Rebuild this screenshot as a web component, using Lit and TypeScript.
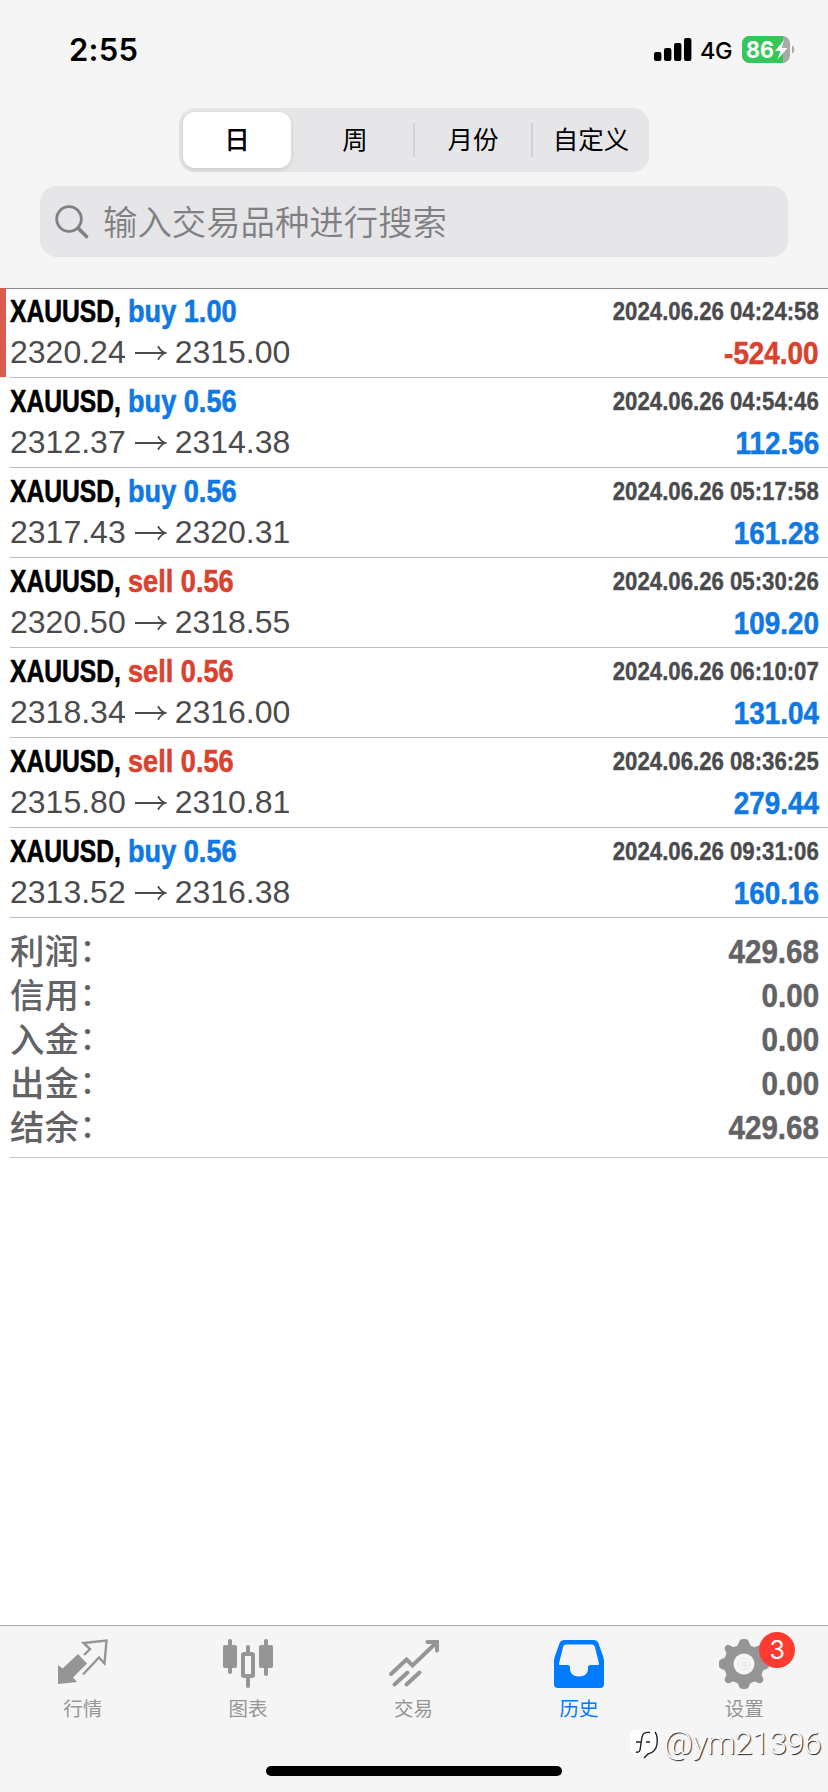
import { LitElement, html, css, svg } from "lit";
import { customElement, property } from "lit/decorators.js";
import { classMap } from "lit/directives/class-map.js";

interface Deal {
  side: "buy" | "sell";
  volume: string;
  open: string;
  close: string;
  time: string;
  profit: string;
}

const deals: Deal[] = [
  { side: "buy", volume: "1.00", open: "2320.24", close: "2315.00", time: "2024.06.26 04:24:58", profit: "-524.00" },
  { side: "buy", volume: "0.56", open: "2312.37", close: "2314.38", time: "2024.06.26 04:54:46", profit: "112.56" },
  { side: "buy", volume: "0.56", open: "2317.43", close: "2320.31", time: "2024.06.26 05:17:58", profit: "161.28" },
  { side: "sell", volume: "0.56", open: "2320.50", close: "2318.55", time: "2024.06.26 05:30:26", profit: "109.20" },
  { side: "sell", volume: "0.56", open: "2318.34", close: "2316.00", time: "2024.06.26 06:10:07", profit: "131.04" },
  { side: "sell", volume: "0.56", open: "2315.80", close: "2310.81", time: "2024.06.26 08:36:25", profit: "279.44" },
  { side: "buy", volume: "0.56", open: "2313.52", close: "2316.38", time: "2024.06.26 09:31:06", profit: "160.16" },
];

const totals: [string, string][] = [
  ["利润", "429.68"],
  ["信用", "0.00"],
  ["入金", "0.00"],
  ["出金", "0.00"],
  ["结余", "429.68"],
];

@customElement("status-bar")
class StatusBar extends LitElement {
  static styles = css`
    :host { display: flex; justify-content: space-between; align-items: center; height: 100px; padding: 0 33px 0 69px; }
    .clock { font: 600 31px/34px Inter, sans-serif; color: #000; letter-spacing: 0.3px; }
    .right { display: flex; align-items: center; }
    .signal { display: block; margin-right: 8px; }
    .net { font: 500 23.500px/30px Inter, sans-serif; margin: 1px 10px 0 0; width: 32px; white-space: nowrap; letter-spacing: -0.3px; }
    .battery { display: block; }
    .pct { font: 700 23px Inter, sans-serif; }
  `;
  render() {
    return html`
      <span class="clock">2:55</span>
      <div class="right">
        <svg class="signal" width="38" height="24" viewBox="0 0 38 24">
          <rect x="0" y="14" width="7.4" height="9" rx="2" />
          <rect x="10" y="10" width="7.4" height="13" rx="2" />
          <rect x="20" y="5" width="7.4" height="18" rx="2" />
          <rect x="30" y="0" width="7.4" height="23" rx="2" />
        </svg>
        <span class="net">4G</span>
        <svg class="battery" width="53" height="28" viewBox="0 0 53 28">
          <defs><clipPath id="b"><rect x="0" y="0" width="48" height="27" rx="7.5" /></clipPath></defs>
          <g clip-path="url(#b)">
            <rect width="48" height="27" fill="#a9a9ab" />
            <rect width="41" height="27" fill="#35c759" />
          </g>
          <path d="M50 9.5c3 1 3 7 0 8z" fill="#a9a9ab" />
          <text class="pct" x="4" y="22" fill="#fff" textLength="28" lengthAdjust="spacingAndGlyphs">86</text>
          <path d="M42 4L33 15h5.500l-3 8.500L45.500 12h-5.500z" fill="#fff" />
        </svg>
      </div>
    `;
  }
}

@customElement("period-tabs")
class PeriodTabs extends LitElement {
  static styles = css`
    :host { display: flex; width: 470px; height: 64px; box-sizing: border-box; padding: 4px 0 4px 4px; border-radius: 16px; background: #e6e6e8; }
    .seg { flex: 1; display: flex; align-items: center; justify-content: center; font: 400 25.500px/36px "Noto Sans CJK SC", sans-serif; color: #000; border-radius: 12px; padding-bottom: 4px; }
    .on { flex: 0 0 108px; background: #fff; font-weight: 500; box-shadow: 0 2px 5px rgba(0, 0, 0, 0.12); margin-right: 6px; }
    .line { border-left: 2px solid #d2d2d5; height: 34px; margin-top: 11px; }
  `;
  render() {
    return html`
      <span class="seg on">日</span><span class="seg">周</span><i class="line"></i>
      <span class="seg">月份</span><i class="line"></i><span class="seg">自定义</span>
    `;
  }
}

@customElement("search-field")
class SearchField extends LitElement {
  static styles = css`
    :host { display: flex; align-items: center; width: 748px; height: 71px; box-sizing: border-box; padding-left: 15px; border-radius: 17px; background: #e6e6e8; }
    .icon { display: block; margin-right: 14px; }
    .hint { font: 350 34.400px/50px "Noto Sans CJK SC", sans-serif; color: #808083; padding-bottom: 3px; }
  `;
  render() {
    return html`
      <svg class="icon" width="34" height="34" viewBox="0 0 34 34" fill="none" stroke="#808083" stroke-linecap="round">
        <circle cx="14" cy="14" r="12.300" stroke-width="2.800" />
        <path d="M23.200 23.200L31.500 31.500" stroke-width="3.600" />
      </svg>
      <span class="hint">输入交易品种进行搜索</span>
    `;
  }
}

@customElement("deal-row")
class DealRow extends LitElement {
  @property({ attribute: false }) deal!: Deal;
  static styles = css`
    :host { display: block; height: 90px; padding-left: 10px; }
    .box { height: 90px; box-sizing: border-box; border-bottom: 1px solid #bdbdbf; padding-right: 9px; display: grid; grid-template-rows: 44px 1fr; color: #4b4b4d; font-family: "Liberation Sans", Arial, sans-serif; }
    .line { display: flex; justify-content: space-between; }
    .title { display: flex; font: 700 32px/46px "Liberation Sans", Arial, sans-serif; height: 43px; -webkit-text-stroke: 0.6px currentColor; }
    .symbol { color: #000; width: 118px; white-space: nowrap; transform: scaleX(0.77); transform-origin: 0 0; }
    .order { white-space: nowrap; transform: scaleX(0.848); transform-origin: 0 0; }
    .time { font: 700 25.500px/46px "Liberation Sans", Arial, sans-serif; white-space: nowrap; transform: scaleX(0.87); transform-origin: 100% 0; -webkit-text-stroke: 0.4px currentColor; }
    .prices { display: flex; align-items: center; font-size: 32px; line-height: 40px; height: 40px; }
    .arrow { display: block; margin: 1px 8px 0 9px; }
    .profit { font-weight: 700; font-size: 32px; line-height: 42px; transform: scaleX(0.87); transform-origin: 100% 0; -webkit-text-stroke: 0.6px currentColor; }
    .blue { color: #0f79e3; }
    .red { color: #d8422f; }
  `;
  render() {
    const d = this.deal;
    const sideTone = { order: true, blue: d.side === "buy", red: d.side === "sell" };
    const loss = d.profit.startsWith("-");
    return html`
      <div class="box">
        <div class="line">
          <div class="title">
            <span class="symbol">XAUUSD,</span>
            <span class=${classMap(sideTone)}>${d.side} ${d.volume}</span>
          </div>
          <span class="time">${d.time}</span>
        </div>
        <div class="line">
          <div class="prices">
            <span>${d.open}</span>
            <svg class="arrow" width="32" height="18" viewBox="0 0 32 18" fill="none" stroke="#4b4b4d" stroke-width="1.800">
              <path d="M0 9H30M23 2.200C25 5.800 27 8 30.500 9C27 10 25 12.200 23 15.800" />
            </svg>
            <span>${d.close}</span>
          </div>
          <span class=${classMap({ profit: true, blue: !loss, red: loss })}>${d.profit}</span>
        </div>
      </div>
    `;
  }
}

const glyphs = {
  quotes: svg`<path d="M20 15L29 24.500L15 38.500L19 43L0 45V26L4.500 29.500z" fill="currentColor"/>
    <path d="M26 16L32 10L25.500 4L48.500 1.500L46.500 24.500L41 18.500L25 35.500" fill="none" stroke="currentColor" stroke-width="2.400"/>`,
  chart: svg`<g fill="currentColor"><rect x="0" y="6" width="14" height="23" rx="2"/><rect x="5" y="0" width="4" height="35" rx="2"/>
    <rect x="36" y="6" width="14" height="23" rx="2"/><rect x="41" y="0" width="4" height="37" rx="2"/>
    <rect x="23" y="6" width="4" height="10" rx="2"/><rect x="23" y="36" width="4" height="13" rx="2"/></g>
    <rect x="20" y="15" width="10" height="22" rx="1" fill="none" stroke="currentColor" stroke-width="4"/>`,
  trade: svg`<g fill="none" stroke="currentColor" stroke-width="4" stroke-linecap="round"><path d="M2 35L17.500 20.500L23.500 26.500L47 4" stroke-linejoin="miter"/>
    <path d="M38.500 3H48V11.500"/><path d="M5.500 45.500L18.500 33.500M17.500 45.500L30.500 33.500"/></g>`,
  history: svg`<path fill="currentColor" fill-rule="evenodd" d="M10 1H40Q43 1 44.200 3.600L49 17Q50 20 50 22V45Q50 49 46 49H4Q0 49 0 45V22Q0 20 1 17L5.800 3.600Q7 1 10 1zM12 5.500Q10 5.500 9.300 7.300L5 24.500Q4.800 26 6 26H13.500Q16 26 16 28.500V30C16 34.500 19.500 37.500 25 37.500S34 34.500 34 30V28.500Q34 26 36.500 26H44Q45.200 26 45 24.500L40.700 7.300Q40 5.500 38 5.500z"/>`,
  settings: svg`<path fill="currentColor" fill-rule="evenodd" d="M21 1Q21.600 0 25 0T29 1L31.500 6.500L35.500 8.200L41 6Q42.500 5.600 44 8L44.500 9.500L42.500 14.500L44 18.500L49.300 21Q50 22 50 25T49.300 29L44 31.500L42.500 35.500L44.500 41Q44 43.500 41 44.500L35.500 42.500L31.500 44L29 49.300Q28 50 25 50T21 49.300L18.500 44L14.500 42.500L9 44.500Q6 43.500 5.500 41L7.500 35.500L6 31.500L.7 29Q0 28 0 25T.7 21L6 18.500L7.500 14.500L5.500 9Q6 6.500 9 5.500L14.500 8.200L18.500 6.500zM25 14.500A10.500 10.500 0 1 0 25 35.500A10.500 10.500 0 1 0 25 14.500z"/>
    <g fill="none" stroke="currentColor" stroke-opacity="0.15"><circle cx="25" cy="25" r="5.500"/><circle cx="25" cy="25" r="2"/></g>`,
};

const tabs = [
  { icon: glyphs.quotes, label: "行情" },
  { icon: glyphs.chart, label: "图表" },
  { icon: glyphs.trade, label: "交易" },
  { icon: glyphs.history, label: "历史", active: true },
  { icon: glyphs.settings, label: "设置", badge: "3" },
];

@customElement("tab-bar")
class TabBar extends LitElement {
  static styles = css`
    :host { display: flex; flex-direction: column; align-items: center; height: 167px; box-sizing: border-box; border-top: 1px solid #a8a8aa; background: #f5f5f5; position: relative; }
    .items { display: flex; align-self: stretch; height: 140px; padding-right: 1px; }
    .tab { flex: 1; display: flex; flex-direction: column; align-items: center; padding-top: 13px; color: #959597; font: 400 19.500px/28px "Noto Sans CJK SC", sans-serif; }
    .active { color: #007aff; }
    .holder { position: relative; height: 50px; margin-bottom: 5px; }
    .holder svg { display: block; }
    .badge { position: absolute; left: 40px; top: -7px; width: 36px; height: 36px; border-radius: 50%; background: #ff3b30; color: #fff; font: 400 25px/36px Inter, sans-serif; text-align: center; }
    .home { width: 296px; height: 10px; border-radius: 5px; background: #000; }
    .mark { position: absolute; right: 7px; bottom: 29px; display: flex; align-items: center; color: #fff; font: 300 32px/40px Roboto, sans-serif; letter-spacing: -0.5px; text-shadow: 1px 1px 1px #222; }
    .mark svg { margin-right: 3px; display: block; }
  `;
  render() {
    return html`
      <div class="items">
        ${tabs.map(
          (t) => html`<div class=${classMap({ tab: true, active: !!t.active })}>
            <div class="holder">
              <svg width="50" height="50" viewBox="0 0 50 50">${t.icon}</svg>
              ${t.badge ? html`<span class="badge">${t.badge}</span>` : ""}
            </div>
            <span>${t.label}</span>
          </div>`
        )}
      </div>
      <div class="home"></div>
      <div class="mark">
        <svg width="32" height="32" viewBox="0 0 32 32">
          <path d="M2 8Q2 3 8 3H25Q30 4 30 12V17Q29 24 22 26L17 30V26H13L10 30Q6 29 2 24z" fill="#fff" />
          <path d="M22 5.500Q15 4.500 14 10L12 23Q11 26 8 25M8 15H13M18 15H22M27 5Q30 9 29 17T20 27L16 31" fill="none" stroke="#222" stroke-width="1.400" />
        </svg>
        <span>@ym21396</span>
      </div>
    `;
  }
}

@customElement("app-root")
class AppRoot extends LitElement {
  static styles = css`
    :host { display: flex; flex-direction: column; width: 828px; height: 1792px; background: #fff; overflow: hidden; }
    .head { height: 289px; flex: none; box-sizing: border-box; background: #f5f5f5; border-bottom: 1px solid #8a8a8c; display: flex; flex-direction: column; align-items: center; }
    .head status-bar { align-self: stretch; }
    .head period-tabs { margin: 8px 0 14px; }
    .list { display: flex; flex-direction: column; margin-top: -1px; }
    .first { box-shadow: inset 6px 0 #dc5b4e; height: 89px; margin-bottom: 1px; }
    .totals { margin-left: 10px; height: 240px; box-sizing: border-box; padding: 11px 9px 0 0; border-bottom: 1px solid #c4c4c6; }
    .total { display: flex; justify-content: space-between; height: 44px; color: #636365; }
    .name { font: 500 34.400px/46px "Liberation Sans", "Noto Sans CJK SC", sans-serif; }
    .colon { position: relative; left: 1px; top: -3px; font-size: 31px; line-height: 20px; }
    .sum { font: 700 34px/44px "Liberation Sans", Arial, sans-serif; transform: scaleX(0.87); transform-origin: 100% 0; -webkit-text-stroke: 0.5px currentColor; }
    .space { flex: 1; }
  `;
  render() {
    return html`
      <header class="head">
        <status-bar></status-bar>
        <period-tabs></period-tabs>
        <search-field></search-field>
      </header>
      <main class="list">
        ${deals.map((d, i) => html`<deal-row class=${classMap({ first: i === 0 })} .deal=${d}></deal-row>`)}
      </main>
      <section class="totals">
        ${totals.map(([n, v]) => html`<div class="total"><span class="name">${n}<span class="colon">：</span></span><span class="sum">${v}</span></div>`)}
      </section>
      <div class="space"></div>
      <tab-bar></tab-bar>
    `;
  }
}
